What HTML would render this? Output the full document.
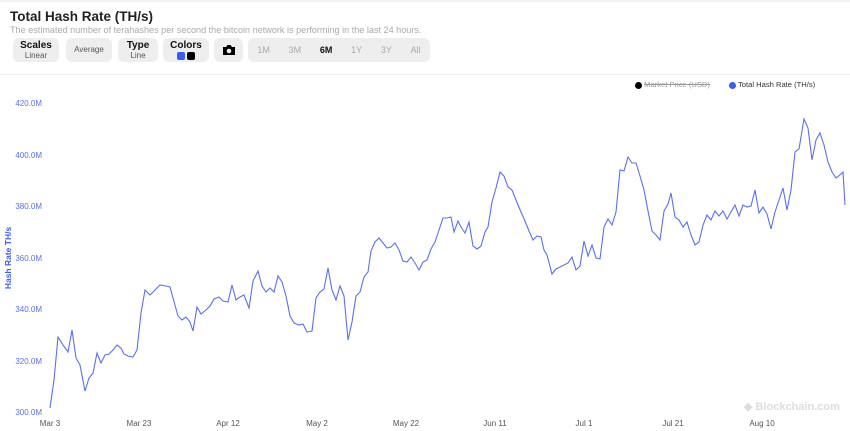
<!DOCTYPE html>
<html><head><meta charset="utf-8"><style>
body{margin:0;width:850px;height:431px;overflow:hidden;background:#fff;font-family:"Liberation Sans",sans-serif;position:relative}
.t{position:absolute;left:10px;top:9px;font-size:13.5px;font-weight:bold;color:#222}
.s{position:absolute;left:10px;top:25px;font-size:9.1px;color:#aaa}
.b{position:absolute;top:38px;height:24px;background:#eee;border-radius:6px;text-align:center;font-size:8px;color:#555;line-height:10px}
.b b{display:block;font-size:10px;color:#111;margin-top:3px}
.line{position:absolute;left:0;right:0;top:74px;border-top:1px solid #f0f0f0}
.top{position:absolute;left:0;right:0;top:0;border-top:2px solid #f3f3f3}
</style></head><body>
<div class="top"></div>
<div class="t">Total Hash Rate (TH/s)</div>
<div class="s">The estimated number of terahashes per second the bitcoin network is performing in the last 24 hours.</div>
<div class="b" style="left:13px;width:46px"><b>Scales</b>Linear</div>
<div class="b" style="left:66px;width:46px;line-height:24px">Average</div>
<div class="b" style="left:118px;width:40px"><b>Type</b>Line</div>
<div class="b" style="left:163px;width:46px"><b>Colors</b><span style="display:inline-block;width:8px;height:8px;background:#3b5bf5;border-radius:2px;margin-top:1px"></span> <span style="display:inline-block;width:8px;height:8px;background:#000;border-radius:2px"></span></div>
<div class="b" style="left:214px;width:29px"><svg width="14" height="12" viewBox="0 0 14 12" style="margin-top:6px"><path d="M1 3h3l1.5-2h3L10 3h3v8H1z" fill="#000"/><circle cx="7" cy="7" r="2.3" fill="#eee"/></svg></div>
<div class="b" style="left:248px;width:182px;line-height:24px;font-size:9px;color:#aaa;display:flex;justify-content:space-around"><span>1M</span><span>3M</span><span style="color:#111;font-weight:bold">6M</span><span>1Y</span><span>3Y</span><span>All</span></div>
<div class="line"></div>
<div style="position:absolute;left:635px;top:80px;font-size:7.6px;color:#999"><span style="display:inline-block;width:7px;height:7px;border-radius:50%;background:#000;vertical-align:middle"></span> <s>Market Price (USD)</s></div>
<div style="position:absolute;left:729px;top:80px;font-size:7.6px;color:#333"><span style="display:inline-block;width:7px;height:7px;border-radius:50%;background:#3b5bf5;vertical-align:middle"></span> Total Hash Rate (TH/s)</div>
<svg width="850" height="431" style="position:absolute;left:0;top:0" font-family="Liberation Sans" font-size="8">
<g fill="#5b6ff5" text-anchor="end">
<text x="42" y="106">420.0M</text><text x="42" y="158">400.0M</text><text x="42" y="209">380.0M</text><text x="42" y="261">360.0M</text><text x="42" y="312">340.0M</text><text x="42" y="364">320.0M</text><text x="42" y="415">300.0M</text>
</g>
<text x="11" y="258" fill="#3b5bf5" font-size="8.5" font-weight="bold" transform="rotate(-90 11 258)" text-anchor="middle">Hash Rate TH/s</text>
<g fill="#555" text-anchor="middle" font-size="8">
<text x="50" y="426">Mar 3</text><text x="139" y="426">Mar 23</text><text x="228" y="426">Apr 12</text><text x="317" y="426">May 2</text><text x="406" y="426">May 22</text><text x="495" y="426">Jun 11</text><text x="584" y="426">Jul 1</text><text x="673" y="426">Jul 21</text><text x="762" y="426">Aug 10</text>
</g>
<text x="744" y="410" fill="#ddd" font-size="11" font-weight="bold">◆ Blockchain.com</text>
<polyline fill="none" stroke="#5b6ff5" stroke-width="1.1" points="50,408 54,380 58,337 63,345 68,352 72,330 76,358 80,365 85,391 89,378 93,373 97,353 101,363 105,355 109,354 113,350 117,345 121,348 124,354 128,356 133,357 137,350 141,313 145,290 150,295 155,290 160,285 166,286 170,287 173,298 178,316 182,320 186,317 190,322 193,331 197,307 201,314 206,310 210,306 214,299 219,297 223,301 228,302 232,285 236,300 240,297 244,295 249,308 253,281 258,271 262,286 266,292 270,288 274,292 278,276 282,282 286,296 290,316 294,323 299,325 303,324 307,332 312,331 316,298 320,292 324,289 328,268 332,290 336,300 340,286 344,296 348,340 352,322 356,296 360,292 364,277 368,272 371,251 375,242 379,238 383,243 387,248 391,247 395,243 399,250 403,261 407,262 411,257 415,263 419,270 423,262 427,260 431,249 435,242 439,230 443,218 447,218 451,217 454,232 458,221 461,227 465,233 469,222 473,246 477,249 481,246 485,232 488,227 492,202 496,188 500,172 504,176 508,187 512,190 516,200 521,212 525,221 529,231 533,240 537,236 541,237 544,250 547,255 552,274 556,269 560,267 564,265 568,263 572,257 576,270 580,266 584,241 588,256 592,245 596,258 600,259 604,227 608,219 612,225 616,212 620,170 624,171 628,157 632,163 636,163 640,176 644,190 648,211 652,231 656,235 660,240 664,211 668,204 671,193 675,217 679,220 683,227 687,222 691,235 695,245 699,242 703,225 707,215 711,220 715,211 719,216 723,211 727,219 731,212 735,205 739,216 743,205 747,207 751,206 755,190 759,213 763,207 767,214 771,229 775,212 779,200 783,188 787,210 791,190 795,152 799,149 804,119 808,128 812,160 816,140 820,133 824,145 828,162 832,172 836,178 840,175 843,172 845,205"/>
</svg>
</body></html>
